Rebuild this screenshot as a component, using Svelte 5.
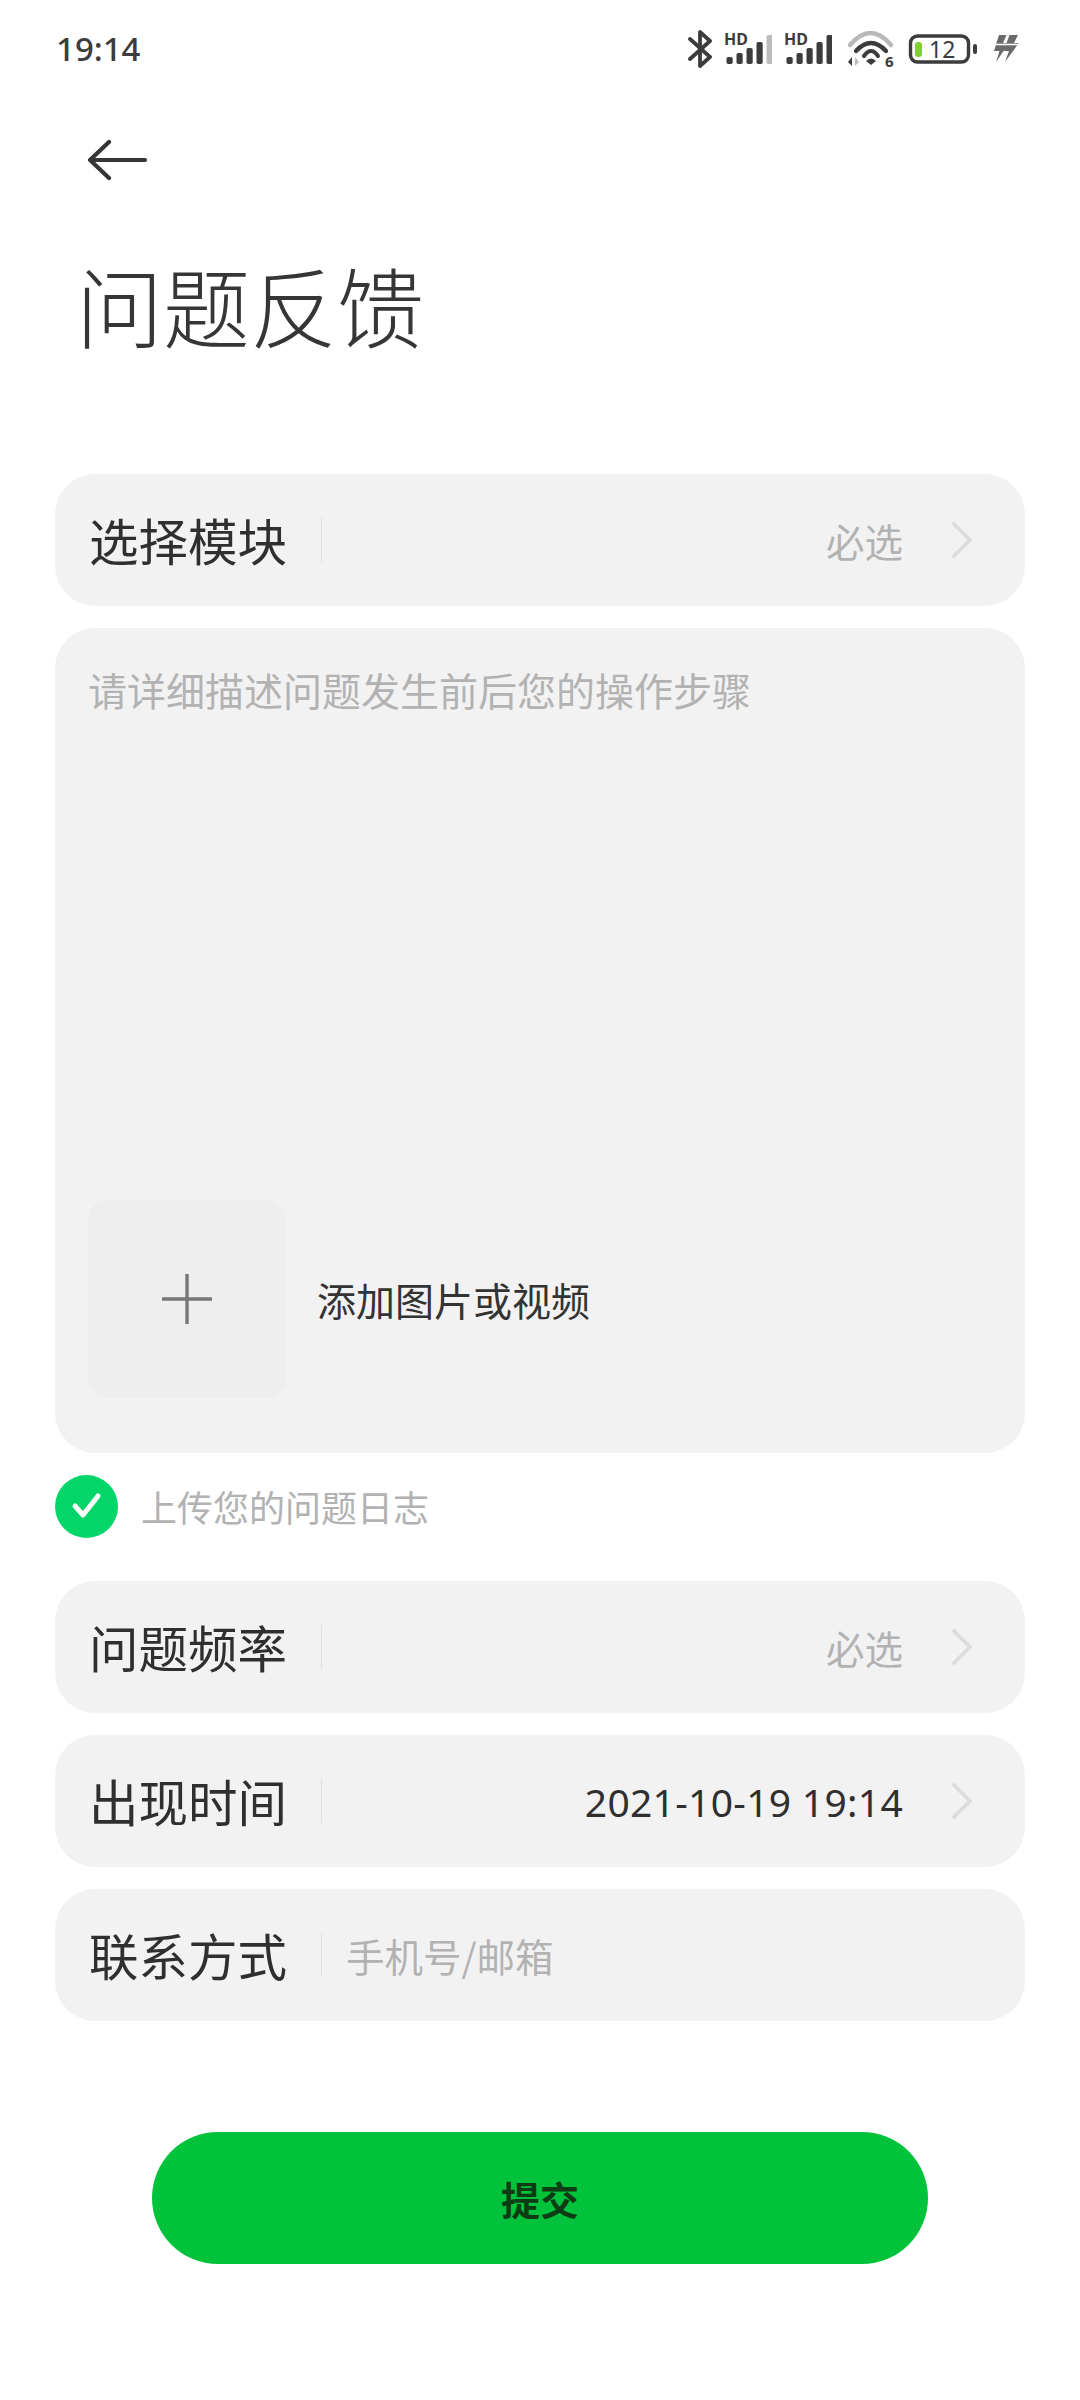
<script>
  const rows = [
    { label: '问题频率', value: '必选', arrow: true },
    { label: '出现时间', value: '2021-10-19 19:14', arrow: true, filled: true },
  ];
  const bars = [
    { x: 68, y: 42, h: 7 },
    { x: 78, y: 38, h: 11 },
    { x: 88, y: 33, h: 16 },
    { x: 98, y: 27, h: 22 },
    { x: 108, y: 20, h: 29 },
  ];
</script>

{#snippet signal(lastColor)}
  <svg class="ic" width="48" height="40" viewBox="64 14 48 40">
    <text x="64" y="30" class="hd">HD</text>
    {#each bars as b, i}
      <rect x={b.x - 1.5} y={b.y} width="6.2" height={b.h} rx="1.8" fill={i === 4 ? lastColor : '#3c3c3c'} />
    {/each}
  </svg>
{/snippet}

{#snippet chevron()}
  <svg class="chev" width="22" height="36" viewBox="0 0 22 36">
    <path d="M3 2 L19 18 L3 34" fill="none" stroke="#dcdcdc" stroke-width="3.8" stroke-linecap="round" stroke-linejoin="round" />
  </svg>
{/snippet}

<div class="page">
  <div class="status">
    <span class="time">19:14</span>
    <div class="icons">
      <svg class="ic" width="24" height="40" viewBox="28 14 24 40">
        <path d="M30 24 L50 42 L40 51 V17 L50 26 L30 44" fill="none" stroke="#3c3c3c" stroke-width="3.8" stroke-linecap="round" stroke-linejoin="round" />
      </svg>
      {@render signal('#bdbdbd')}
      {@render signal('#3c3c3c')}
      <svg class="ic" width="52" height="48" viewBox="184 14 52 48">
        <path d="M190 30 Q210.5 6 231 30" fill="none" stroke="#b9b9b9" stroke-width="4.4" stroke-linecap="round" />
        <path d="M196 36 Q211 20 226 36" fill="none" stroke="#3c3c3c" stroke-width="4.4" stroke-linecap="round" />
        <path d="M204 41 Q211 31 218 41" fill="none" stroke="#3c3c3c" stroke-width="4" stroke-linecap="round" />
        <path d="M206 46 Q211 41 216 46 L211 50 Z" fill="#3c3c3c" />
        <path d="M192 42 V51 L188 47 Z" fill="#3c3c3c" />
        <path d="M195 42 V51 L199 47 Z" fill="#bdbdbd" />
        <text x="225" y="52" class="six">6</text>
      </svg>
      <svg class="ic" width="72" height="40" viewBox="248 14 72 40">
        <rect x="250.5" y="21" width="58" height="26" rx="7" fill="none" stroke="#3c3c3c" stroke-width="3.4" />
        <rect x="255" y="27" width="7" height="15" rx="3" fill="#7ed02c" />
        <text x="269" y="43" class="level">12</text>
        <rect x="313" y="29" width="4" height="10" rx="2" fill="#3c3c3c" />
      </svg>
      <svg class="ic" width="28" height="40" viewBox="332 14 28 40">
        <path d="M339 20 H346.5 L343 28 H349 L336 47 L339.5 36 H334 Z" fill="#6a6a6a" />
        <path d="M349.5 20 H358 L354 28 H359 L345 47 L349 36 H343.5 Z" fill="#6a6a6a" />
        <path d="M333 29.5 H360" stroke="#fff" stroke-width="1.6" />
      </svg>
    </div>
  </div>

  <div class="nav">
    <svg width="60" height="42" viewBox="0 0 60 42">
      <path d="M57 21 H2 M21 3 L2 21 L21 39" fill="none" stroke="#363636" stroke-width="4.2" stroke-linecap="round" stroke-linejoin="round" />
    </svg>
  </div>

  <h1>问题反馈</h1>

  <div class="form">
    <div class="row">
      <span class="label">选择模块</span>
      <span class="sep"></span>
      <span class="value">必选</span>
      {@render chevron()}
    </div>

    <div class="desc">
      <div class="hint">请详细描述问题发生前后您的操作步骤</div>
      <div class="attach">
        <div class="add">
          <svg width="50" height="50" viewBox="0 0 50 50">
            <path d="M25 0 V50 M0 25 H50" stroke="#777" stroke-width="3.4" />
          </svg>
        </div>
        <span class="attach-text">添加图片或视频</span>
      </div>
    </div>

    <div class="log">
      <span class="check">
        <svg width="32" height="28" viewBox="0 0 32 28">
          <path d="M4 14 L12 23 L27 4" fill="none" stroke="#fff" stroke-width="5" stroke-linecap="round" stroke-linejoin="round" />
        </svg>
      </span>
      <span class="log-text">上传您的问题日志</span>
    </div>

    {#each rows as r}
      <div class="row">
        <span class="label">{r.label}</span>
        <span class="sep"></span>
        <span class="value" class:filled={r.filled}>{r.value}</span>
        {@render chevron()}
      </div>
    {/each}

    <div class="row">
      <span class="label">联系方式</span>
      <span class="sep"></span>
      <span class="contact">手机号/邮箱</span>
    </div>
  </div>

  <button class="submit">提交</button>
</div>

<style>
  :global(body) {
    background: #fff;
  }

  .page {
    width: 1080px;
    height: 2400px;
    font-family: "Noto Sans CJK SC", "Noto Sans", sans-serif;
    color: #333;
  }

  .status {
    height: 100px;
    padding: 0 60px 0 56px;
    display: flex;
    align-items: flex-start;
    justify-content: space-between;
  }

  .time {
    margin-top: 26px;
    font-family: "Noto Sans", sans-serif;
    font-size: 33px;
    line-height: 46px;
    font-weight: 500;
    color: #3c3c3c;
  }

  .icons {
    margin-top: 29px;
    display: flex;
    align-items: flex-start;
    gap: 12px;
  }

  .ic {
    display: block;
  }

  .hd {
    font: 700 16px "Noto Sans", sans-serif;
    fill: #3c3c3c;
  }

  .six {
    font: 700 15px "Noto Sans", sans-serif;
    fill: #3c3c3c;
  }

  .level {
    font: 400 23px "Noto Sans", sans-serif;
    fill: #3c3c3c;
  }

  .nav {
    height: 42px;
    padding: 39px 0 0 88px;
  }

  .nav svg {
    display: block;
  }

  h1 {
    margin: 63px 0 0 76px;
    font-size: 87px;
    line-height: 120px;
    font-weight: 300;
    color: #363636;
  }

  .form {
    margin-top: 110px;
    padding: 0 55px;
    display: flex;
    flex-direction: column;
    gap: 22px;
  }

  .row {
    height: 132px;
    padding: 0 52px 0 34px;
    box-sizing: border-box;
    display: flex;
    align-items: center;
    background: #f2f2f2;
    border-radius: 40px;
  }

  .label {
    width: 198px;
    font-size: 49.5px;
    line-height: 60px;
    color: #2f2f2f;
  }

  .sep {
    width: 1px;
    height: 44px;
    margin-left: 34px;
    background: #dfdfdf;
  }

  .value {
    margin-left: auto;
    margin-right: 48px;
    font-size: 38.5px;
    color: #b2b2b2;
  }

  .value.filled {
    font-family: "Noto Sans", sans-serif;
    font-size: 39px;
    letter-spacing: 0.3px;
    color: #2f2f2f;
  }

  .contact {
    margin-left: 24px;
    font-size: 38.5px;
    color: #b2b2b2;
  }

  .chev {
    flex: none;
  }

  .desc {
    height: 825px;
    padding: 33px 33px 55px;
    box-sizing: border-box;
    display: flex;
    flex-direction: column;
    justify-content: space-between;
    background: #f2f2f2;
    border-radius: 40px;
  }

  .hint {
    font-size: 39px;
    line-height: 56px;
    color: #b2b2b2;
  }

  .attach {
    display: flex;
    align-items: center;
    gap: 31px;
  }

  .add {
    width: 198px;
    height: 198px;
    display: flex;
    align-items: center;
    justify-content: center;
    background: #eee;
    border-radius: 20px;
  }

  .attach-text {
    font-size: 39px;
    color: #333;
  }

  .log {
    height: 64px;
    margin: -1px 0 21px;
    display: flex;
    align-items: center;
    gap: 23px;
  }

  .check {
    width: 63px;
    height: 63px;
    flex: none;
    display: flex;
    align-items: center;
    justify-content: center;
    background: #04d568;
    border-radius: 50%;
  }

  .log-text {
    font-size: 36px;
    color: #b2b2b2;
  }

  .submit {
    display: block;
    width: 776px;
    height: 132px;
    margin: 111px auto 0;
    border: none;
    border-radius: 66px;
    background: #00c23b;
    font-family: inherit;
    font-size: 39px;
    font-weight: 700;
    color: #0c3b14;
  }
</style>
